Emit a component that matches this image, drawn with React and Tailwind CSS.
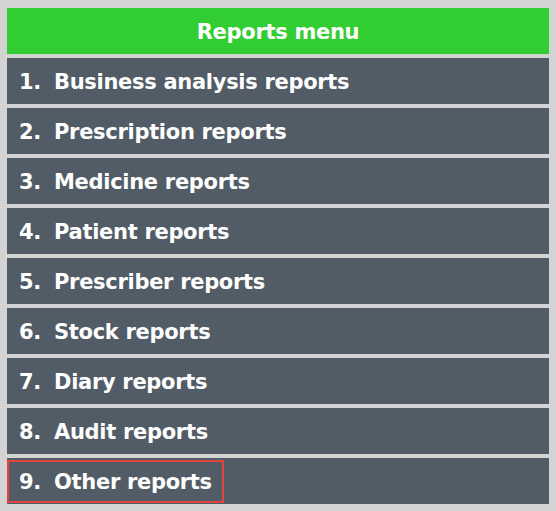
const items = [
  'Business analysis reports',
  'Prescription reports',
  'Medicine reports',
  'Patient reports',
  'Prescriber reports',
  'Stock reports',
  'Diary reports',
  'Audit reports',
  'Other reports',
];

export default function App() {
  return (
    <div className="min-h-screen bg-[#d3d3d3] px-[7px] pt-[8px] pb-[7px] font-['Tahoma','DejaVu_Sans',sans-serif] font-bold tracking-[-0.3px] text-white">
      <div className="flex flex-col gap-[4px]">
        <div className="flex h-[46px] items-center justify-center bg-[#32cd32] pt-[4px] text-[21px]">
          Reports menu
        </div>
        {items.map((label, i) => (
          <div key={label} className="flex h-[46px] items-center bg-[#525c66]">
            <a
              href="#"
              className={
                'flex h-[43px] items-center border-2 pt-[4px] pl-[10px] pr-[10px] text-[21px] ' +
                (i === items.length - 1 ? 'border-[#e2453f]' : 'border-transparent')
              }
            >
              <span className="w-[35px]">{i + 1}.</span>
              <span>{label}</span>
            </a>
          </div>
        ))}
      </div>
    </div>
  );
}
